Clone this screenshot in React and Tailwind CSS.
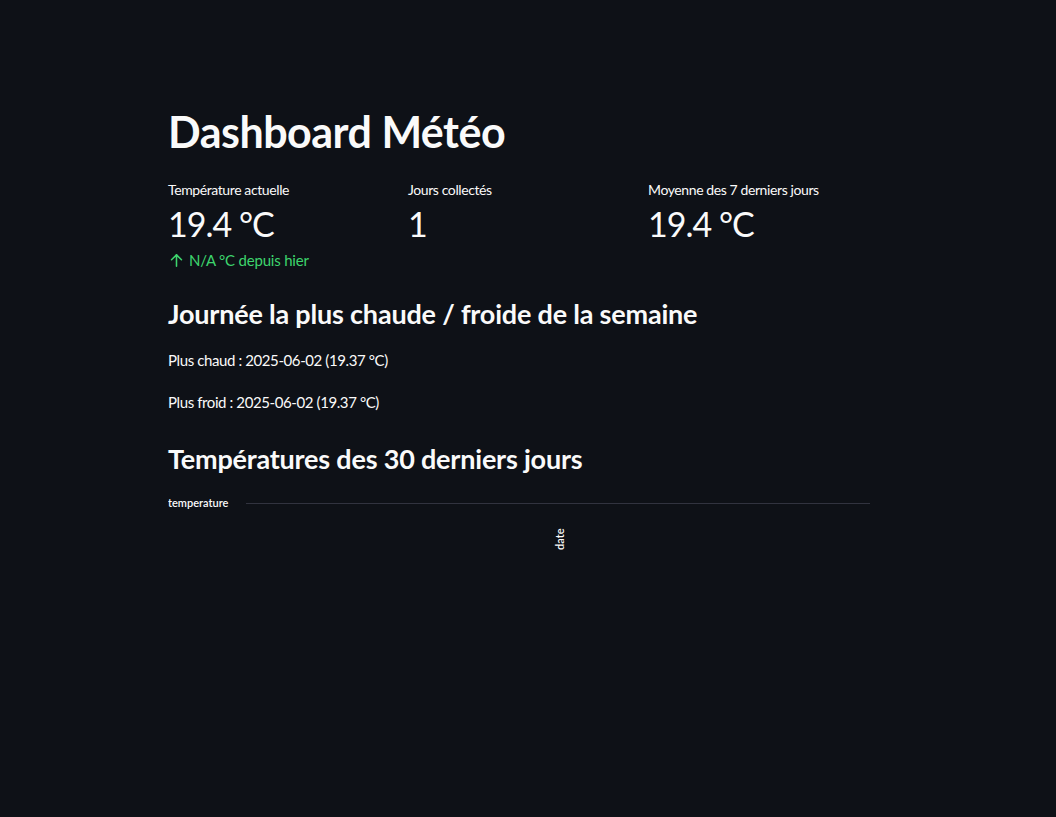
import React from 'react';

const metrics = [
  { label: 'Température actuelle', value: '19.4 °C', delta: 'N/A °C depuis hier' },
  { label: 'Jours collectés', value: '1' },
  { label: 'Moyenne des 7 derniers jours', value: '19.4 °C' },
];

const Metric = ({ label, value, delta }) => (
  <div className="flex flex-col">
    <div className="text-[14px] leading-[20px] h-[20px] tracking-[-0.4px]">{label}</div>
    <div className="text-[34px] leading-[48px] font-normal tracking-[-1px]">{value}</div>
    {delta && (
      <div className="flex items-center gap-[4px] text-[15px] leading-[24px] text-[#3dd56d] tracking-[-0.2px]">
        <svg width="17" height="17" viewBox="0 0 24 24" fill="none" stroke="currentColor" strokeWidth="2.2" strokeLinecap="round" strokeLinejoin="round">
          <path d="M12 20V4" />
          <path d="M5 11l7-7 7 7" />
        </svg>
        <span>{delta}</span>
      </div>
    )}
  </div>
);

// graphique vide (vega-lite sans données)
const EmptyChart = () => (
  <svg width="704" height="70" className="block">
    <text x="0" y="15" fill="#fafafa" fontSize="11" fontWeight="600" style={{ fontFamily: 'Lato, sans-serif' }}>
      temperature
    </text>
    <line x1="78" y1="11.5" x2="702" y2="11.5" stroke="#31333f" strokeWidth="1" />
    <text transform="translate(396 58) rotate(-90)" fill="#fafafa" fontSize="11" fontWeight="600" style={{ fontFamily: 'Lato, sans-serif' }}>
      date
    </text>
  </svg>
);

const App = () => {
  return (
    <div className="min-h-screen bg-[#0e1117] text-[#fafafa]" style={{ fontFamily: 'Lato, "Noto Sans", sans-serif' }}>
      <div className="w-[736px] ml-[152px] px-4 pt-[106px]">
        <h1 className="text-[43px] leading-[52px] font-bold tracking-[-0.5px]">Dashboard Météo</h1>

        <div className="grid grid-cols-3 gap-4 mt-[22px]">
          {metrics.map((m, i) => (
            <Metric key={i} {...m} />
          ))}
        </div>

        <h3 className="text-[27px] leading-[36px] font-bold tracking-[-0.2px] mt-[24px]">
          Journée la plus chaude / froide de la semaine
        </h3>
        <p className="text-[15px] leading-[24px] tracking-[-0.4px] mt-[16px]">Plus chaud : 2025-06-02 (19.37 °C)</p>
        <p className="text-[15px] leading-[24px] tracking-[-0.4px] mt-[18px]">Plus froid : 2025-06-02 (19.37 °C)</p>

        <h3 className="text-[27px] leading-[36px] font-bold tracking-[-0.2px] mt-[27px]">
          Températures des 30 derniers jours
        </h3>
        <div className="mt-[15px]">
          <EmptyChart />
        </div>
      </div>
    </div>
  );
};

export default App;
